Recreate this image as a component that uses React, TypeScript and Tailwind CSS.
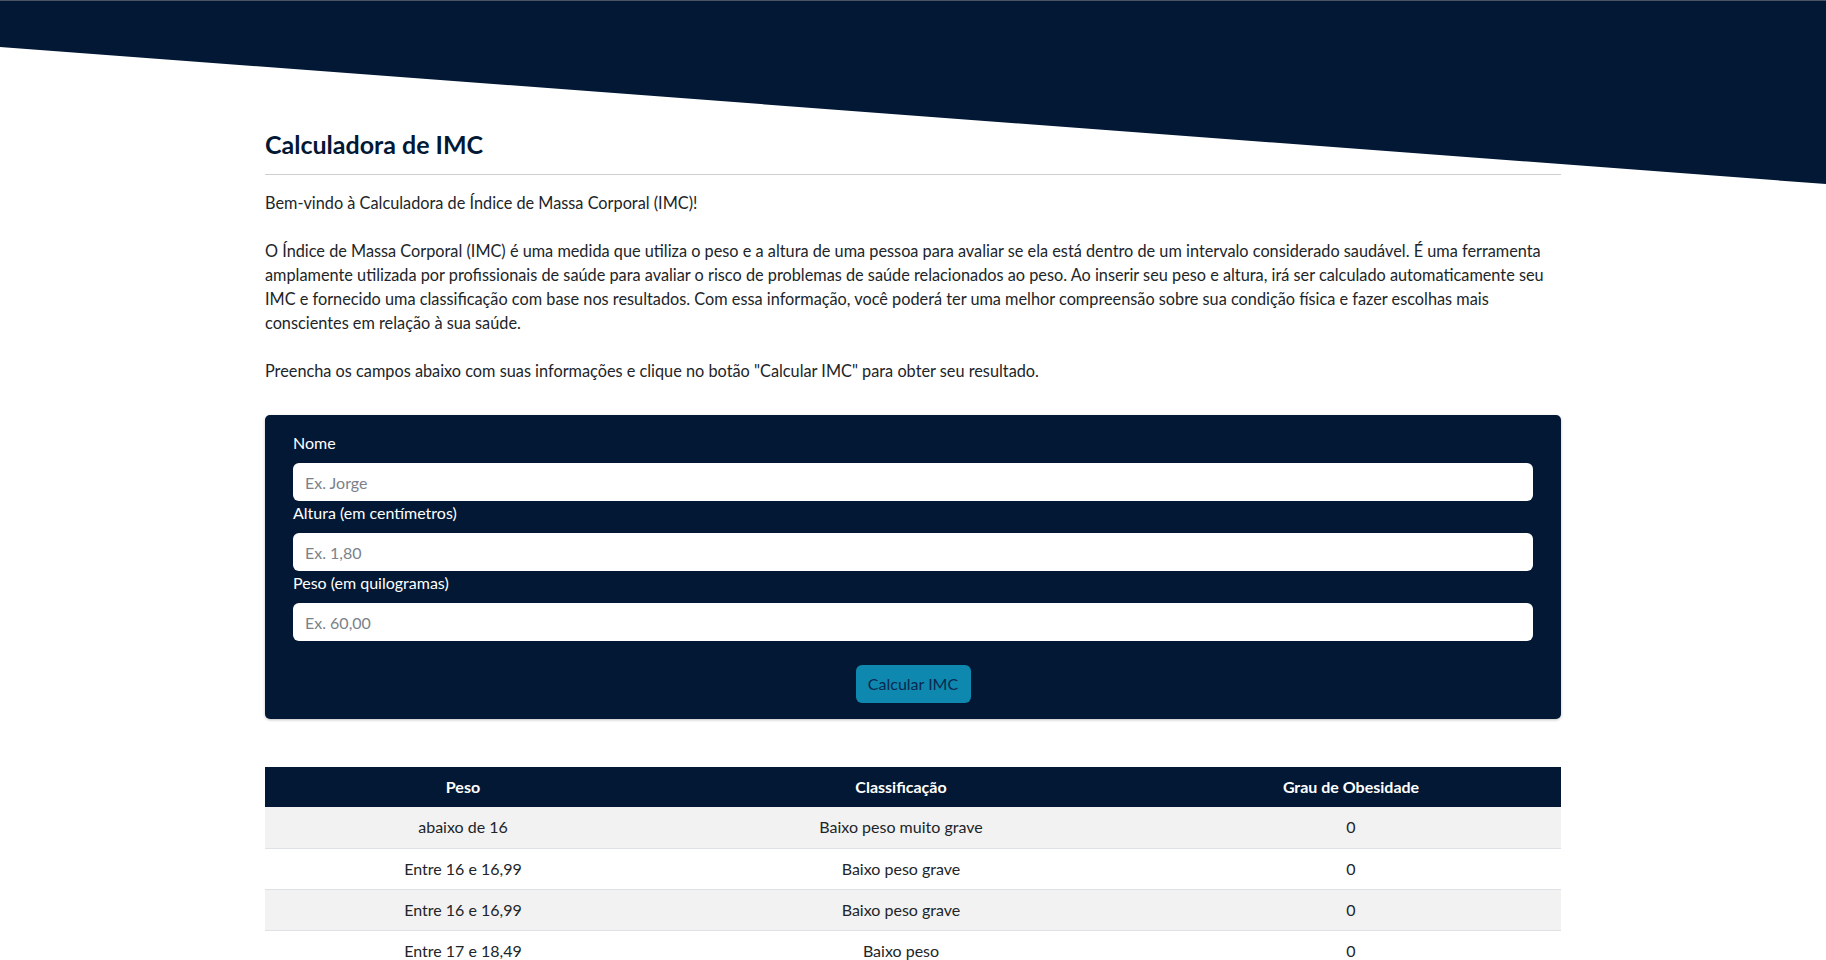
import React from "react";

const rows = [
  ["abaixo de 16", "Baixo peso muito grave", "0"],
  ["Entre 16 e 16,99", "Baixo peso grave", "0"],
  ["Entre 16 e 16,99", "Baixo peso grave", "0"],
  ["Entre 17 e 18,49", "Baixo peso", "0"],
];

export default function App() {
  return (
    <div
      className="relative min-h-screen overflow-hidden bg-white text-[#212529] border-t border-[#4a5462]"
      style={{ fontFamily: "Lato, 'Open Sans', sans-serif" }}
    >
      <svg
        className="absolute left-0 top-0 w-full h-[183px]"
        viewBox="0 0 1826 183"
        preserveAspectRatio="none"
      >
        <polygon points="0,0 1826,0 1826,183 0,46" fill="#021835" />
      </svg>

      <div className="relative mx-auto w-[1296px] pt-[129px] pb-4">
        <h1 className="text-[25px] leading-[29px] font-bold text-[#021835]">Calculadora de IMC</h1>
        <hr className="mt-[15px] border-0 border-t border-[#cfcfcf]" />
        <div className="mt-[16px] text-[16.3px] leading-[24px]">
          <p>Bem-vindo à Calculadora de Índice de Massa Corporal (IMC)!</p>
          <p className="mt-[24px]">
            O Índice de Massa Corporal (IMC) é uma medida que utiliza o peso e a altura de uma pessoa para avaliar se ela está dentro de um intervalo considerado saudável. É uma ferramenta
            <br />
            amplamente utilizada por profissionais de saúde para avaliar o risco de problemas de saúde relacionados ao peso. Ao inserir seu peso e altura, irá ser calculado automaticamente seu
            <br />
            IMC e fornecido uma classificação com base nos resultados. Com essa informação, você poderá ter uma melhor compreensão sobre sua condição física e fazer escolhas mais
            <br />
            conscientes em relação à sua saúde.
          </p>
          <p className="mt-[24px]">
            Preencha os campos abaixo com suas informações e clique no botão "Calcular IMC" para obter seu resultado.
          </p>
        </div>

        <form className="mt-[32px] rounded-[5px] bg-[#021835] px-[28px] pt-4 pb-4 shadow-[0_1px_3px_rgba(0,0,0,0.25)]">
          <label className="block text-[16px] leading-[24px] text-white mb-2">Nome</label>
          <input
            className="block w-full h-[38px] rounded-[6px] bg-white px-3 text-[16px] text-[#212529] placeholder:text-[#7a828a] outline-none"
            placeholder="Ex. Jorge"
          />
          <label className="block text-[16px] leading-[24px] text-white mb-2">Altura (em centímetros)</label>
          <input
            className="block w-full h-[38px] rounded-[6px] bg-white px-3 text-[16px] text-[#212529] placeholder:text-[#7a828a] outline-none"
            placeholder="Ex. 1,80"
          />
          <label className="block text-[16px] leading-[24px] text-white mb-2">Peso (em quilogramas)</label>
          <input
            className="block w-full h-[38px] rounded-[6px] bg-white px-3 text-[16px] text-[#212529] placeholder:text-[#7a828a] outline-none"
            placeholder="Ex. 60,00"
          />
          <div className="mt-6 flex justify-center">
            <button
              type="button"
              className="h-[38px] w-[115px] rounded-[6px] bg-[#0f88b0] text-[16px] text-[#08284d]"
            >
              Calcular IMC
            </button>
          </div>
        </form>

        <table className="mt-[48px] w-full border-collapse text-[16px]">
          <thead>
            <tr className="bg-[#021835] text-white">
              <th className="w-[396px] h-[40px] font-bold text-center">Peso</th>
              <th className="w-[480px] h-[40px] font-bold text-center">Classificação</th>
              <th className="w-[420px] h-[40px] font-bold text-center">Grau de Obesidade</th>
            </tr>
          </thead>
          <tbody>
            {rows.map((r, i) => (
              <tr key={i} className={`border-b border-[#dee2e6] ${i % 2 === 0 ? "bg-[#f2f2f2]" : "bg-white"}`}>
                <td className="h-[41px] text-center">{r[0]}</td>
                <td className="h-[41px] text-center">{r[1]}</td>
                <td className="h-[41px] text-center">{r[2]}</td>
              </tr>
            ))}
          </tbody>
        </table>
      </div>
    </div>
  );
}
